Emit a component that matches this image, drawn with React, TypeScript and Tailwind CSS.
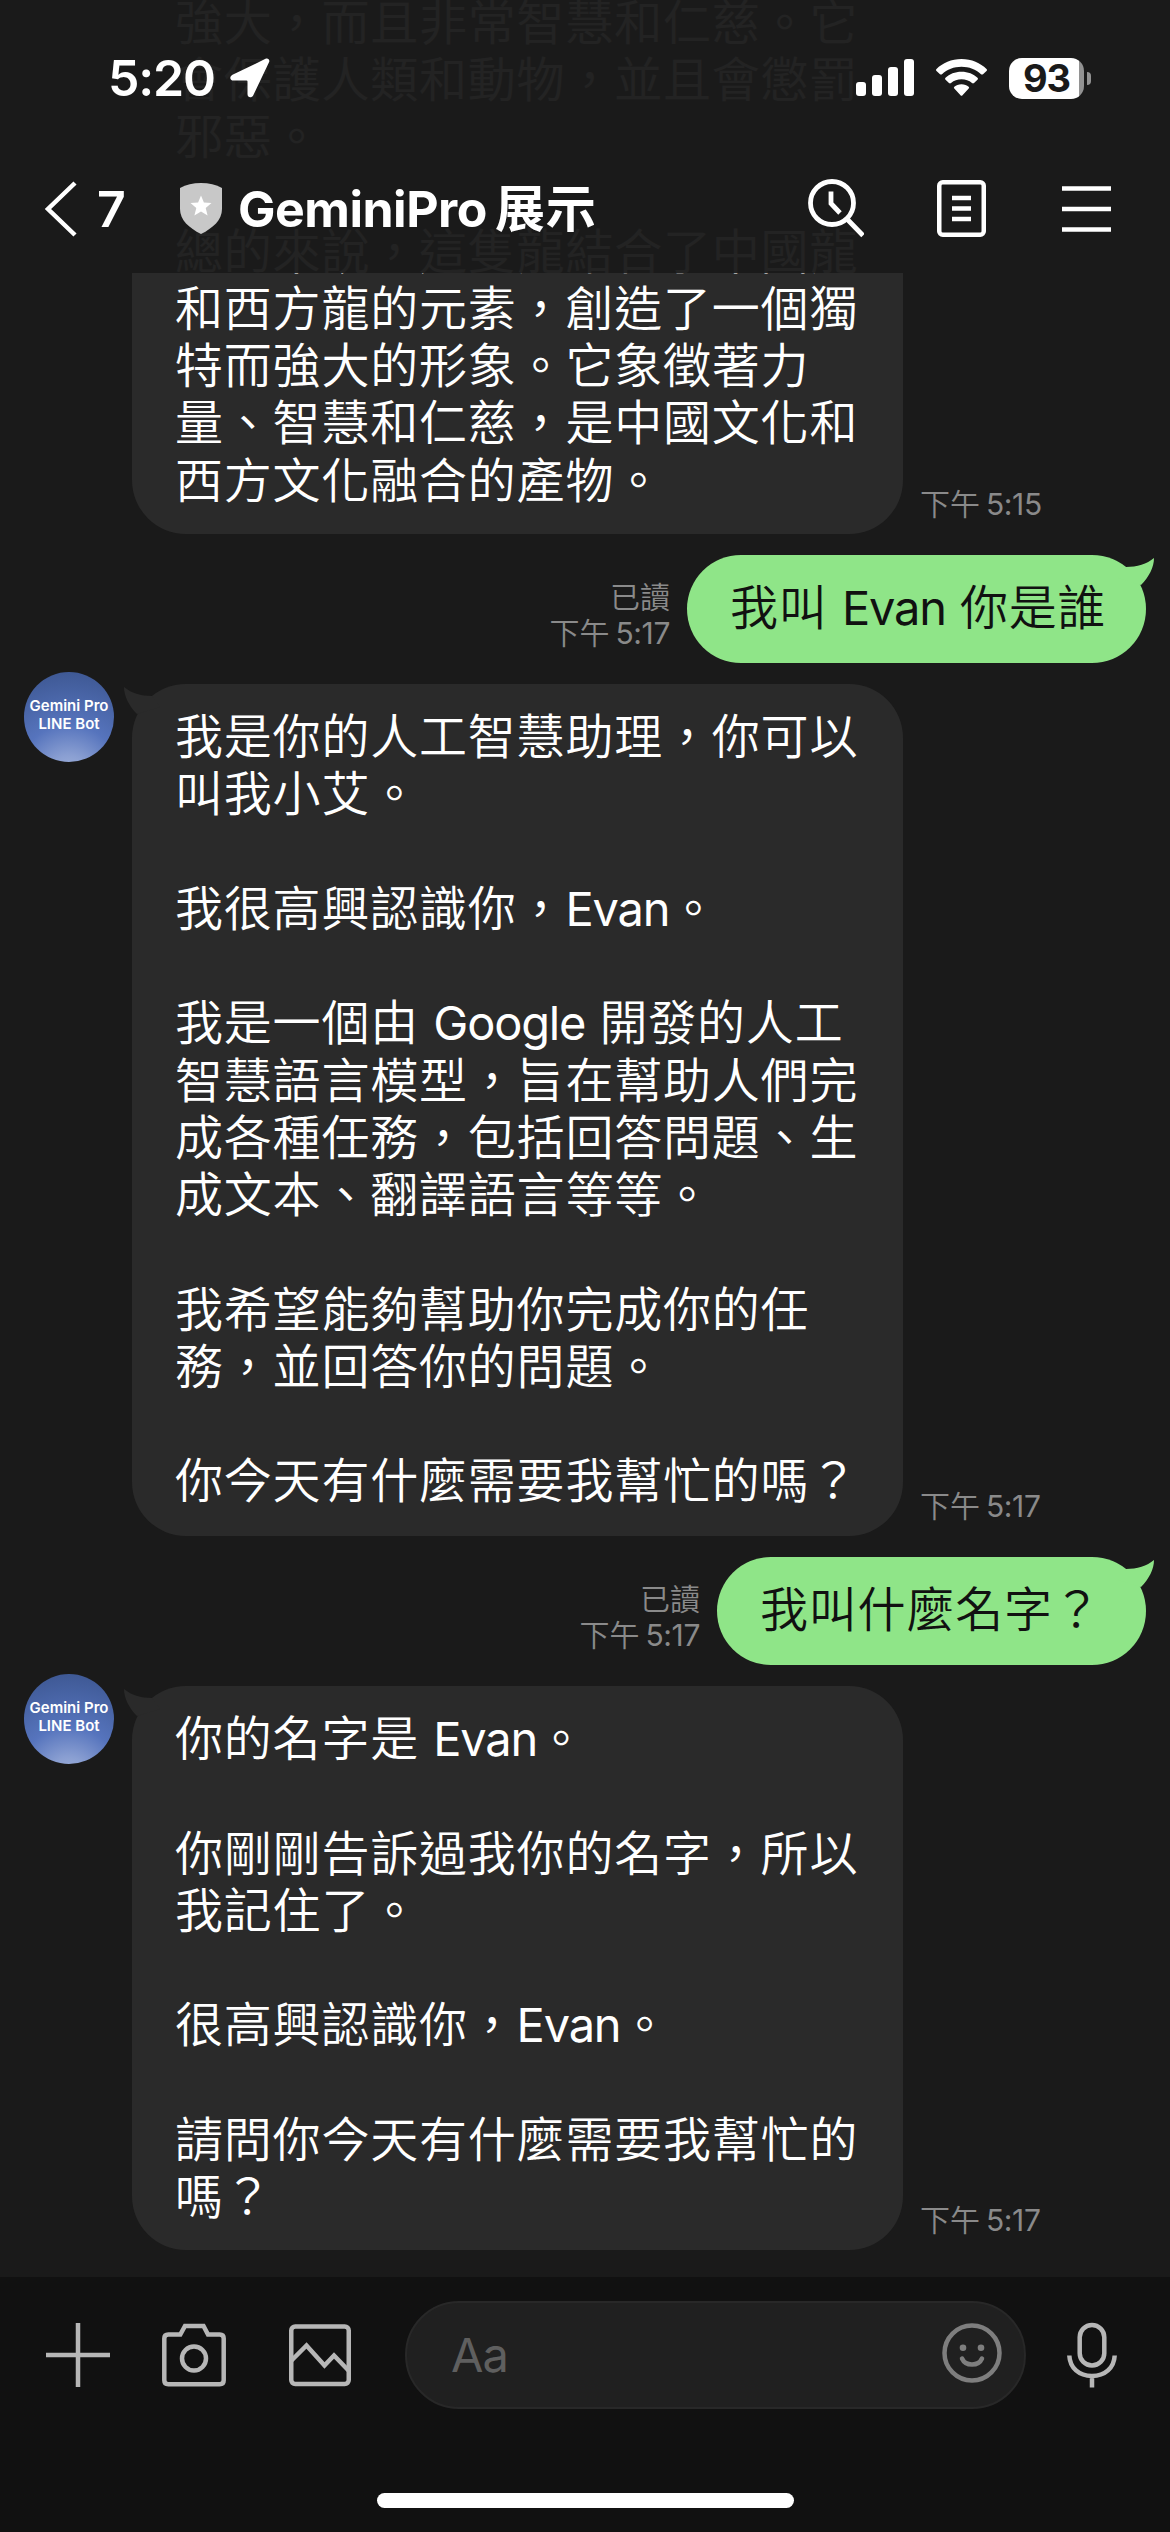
import { clsx } from "clsx";

type Message = {
  id: string;
  from: "bot" | "me";
  time: string;
  lines: string[];
  height: string;
  continued?: boolean;
};

const messages: Message[] = [
  {
    id: "m1",
    from: "bot",
    time: "5:15",
    height: "h-[534px]",
    continued: true,
    lines: [
      "強大，而且非常智慧和仁慈。它",
      "會保護人類和動物，並且會懲罰",
      "邪惡。",
      "",
      "總的來說，這隻龍結合了中國龍",
      "和西方龍的元素，創造了一個獨",
      "特而強大的形象。它象徵著力",
      "量、智慧和仁慈，是中國文化和",
      "西方文化融合的產物。",
    ],
  },
  { id: "m2", from: "me", time: "5:17", height: "h-[108px] w-[459px]", lines: ["我叫 Evan 你是誰"] },
  {
    id: "m3",
    from: "bot",
    time: "5:17",
    height: "h-[852px]",
    lines: [
      "我是你的人工智慧助理，你可以",
      "叫我小艾。",
      "",
      "我很高興認識你，Evan。",
      "",
      "我是一個由 Google 開發的人工",
      "智慧語言模型，旨在幫助人們完",
      "成各種任務，包括回答問題、生",
      "成文本、翻譯語言等等。",
      "",
      "我希望能夠幫助你完成你的任",
      "務，並回答你的問題。",
      "",
      "你今天有什麼需要我幫忙的嗎？",
    ],
  },
  { id: "m4", from: "me", time: "5:17", height: "h-[108px] w-[429px]", lines: ["我叫什麼名字？"] },
  {
    id: "m5",
    from: "bot",
    time: "5:17",
    height: "h-[564px]",
    lines: [
      "你的名字是 Evan。",
      "",
      "你剛剛告訴過我你的名字，所以",
      "我記住了。",
      "",
      "很高興認識你，Evan。",
      "",
      "請問你今天有什麼需要我幫忙的",
      "嗎？",
    ],
  },
];

// Latin runs are set slightly tighter than the CJK text around them
function Line({ text }: { text: string }) {
  const parts = text.split(/([A-Za-z]+)/);
  return (
    <p className="h-[57.27px] shrink-0 font-[350] whitespace-pre">
      {parts.map((part, i) =>
        /[A-Za-z]/.test(part) ? (
          <span key={i} className="text-[47px] font-normal tracking-[-1.2px]">
            {part}
          </span>
        ) : (
          part
        ),
      )}
    </p>
  );
}

function Time({ value }: { value: string }) {
  return (
    <p className="flex items-baseline gap-[6px] whitespace-nowrap">
      <span className="font-[350]">下午</span>
      <span className="tracking-[-0.4px]">{value}</span>
    </p>
  );
}

function Avatar() {
  return (
    <div className="-mt-3 flex size-[90px] shrink-0 flex-col items-center justify-center rounded-full bg-[radial-gradient(circle_at_50%_115%,#a3b4dc_0%,#8a9fd2_18%,#5674bd_45%,#3d5792_95%)] pb-1 text-[15px] leading-[18px] font-semibold whitespace-nowrap text-white">
      <span>Gemini Pro</span>
      <span>LINE Bot</span>
    </div>
  );
}

function BotMessage({ message }: { message: Message }) {
  return (
    <div className="flex pl-6">
      {message.continued ? <div className="w-[90px] shrink-0" /> : <Avatar />}
      <div
        className={clsx(
          "relative ml-[18px] w-[771px] bg-[#2a2a2a] pl-[43px] text-[48px] leading-[57.27px] tracking-[0.8px] text-white",
          message.height,
          message.continued ? "flex flex-col justify-end rounded-b-[54px] pb-[25px]" : "rounded-[54px] pt-[24px]",
        )}
      >
        {!message.continued && (
          <svg className="absolute top-[3px] left-[-8px]" width="40" height="40" viewBox="0 0 40 40" fill="#2a2a2a">
            <path d="M0 0C7 6 17 9 28 9L36 20L13 27C5 19 0 9 0 0Z" />
          </svg>
        )}
        {message.lines.map((line, i) => (
          <Line key={i} text={line} />
        ))}
      </div>
      <div className="ml-[17px] self-end pb-[12px] text-[30px] leading-9 text-[#8a8a8a]">
        <Time value={message.time} />
      </div>
    </div>
  );
}

function MyMessage({ message }: { message: Message }) {
  return (
    <div className="flex justify-end pr-6">
      <div className="mr-[17px] flex flex-col items-end self-end pb-[12px] text-[30px] leading-9 text-[#8a8a8a]">
        <p className="font-[350]">已讀</p>
        <Time value={message.time} />
      </div>
      <div
        className={clsx(
          "relative rounded-[54px] bg-[#8fe588] pt-[24px] pl-[43px] text-[48px] leading-[57.27px] tracking-[0.8px] text-[#111]",
          message.height,
        )}
      >
        <svg className="absolute top-[3px] right-[-8px]" width="40" height="40" viewBox="0 0 40 40" fill="#8fe588">
          <path d="M40 0C33 6 23 9 12 9L4 20L27 27C35 19 40 9 40 0Z" />
        </svg>
        {message.lines.map((line, i) => (
          <Line key={i} text={line} />
        ))}
      </div>
    </div>
  );
}

function StatusBar() {
  return (
    <div className="flex h-[156px] items-center pl-[108px] text-white">
      <span className="w-[107px] text-[50px] leading-none font-semibold tracking-[-1.2px]">5:20</span>
      <svg className="ml-[15px]" width="40" height="40" viewBox="0 0 40 40" fill="currentColor">
        <path d="M35.500 .8 2.500 16.800C-.8 18.500-.3 22.500 3.500 22.500H16.500Q17.500 22.500 17.500 23.500V36C17.500 39.800 21.700 40.400 23.300 37.200L39 4.300C40.200 1.700 38 -.3 35.500 .8Z" />
      </svg>
      <svg className="ml-[586px]" width="58" height="38" viewBox="0 0 58 38" fill="currentColor">
        <rect x="0" y="23" width="10" height="14" rx="3" />
        <rect x="16" y="16" width="10" height="21" rx="3" />
        <rect x="32" y="8" width="10" height="29" rx="3" />
        <rect x="48" y="0" width="10" height="37" rx="3" />
      </svg>
      <svg className="ml-[22px]" width="51" height="38" viewBox="0 0 51 38" fill="currentColor">
        <path d="M25.500 0C35.500 0 44.500 4 50.500 10Q51.500 11 50.500 12L47 15.200Q46 16 45 15.200C40 10.500 33 7.800 25.500 7.800S11 10.500 6 15.200Q5 16 4 15.200L.500 12Q-.5 11 .5 10C6.500 4 15.500 0 25.500 0Z" />
        <path d="M25.500 12.700C32 12.700 37.500 15 41.500 18.700Q42.500 19.700 41.500 20.700L38 24Q37 24.800 36 24C33 21.600 29.500 20.300 25.500 20.300S18 21.600 15 24Q14 24.800 13 24L9.500 20.700Q8.500 19.700 9.500 18.700C13.500 15 19 12.700 25.500 12.700Z" />
        <path d="M25.500 25.300C28.500 25.300 30.800 26.200 32.700 27.700Q33.600 28.600 32.700 29.500L26.500 36.300Q25.500 37.300 24.500 36.300L18.300 29.500Q17.400 28.600 18.300 27.700C20.200 26.200 22.500 25.300 25.500 25.300Z" />
      </svg>
      <div className="ml-[22px] flex h-[41px] w-[75px] items-center justify-center rounded-[13px] bg-[linear-gradient(90deg,#fff_70px,#929292_70px)] text-[38px] leading-none font-bold tracking-[-1.2px] text-[#1a1a1a]">
        93
      </div>
      <div className="ml-[3px] h-[13px] w-1 rounded-r-full bg-[#929292]" />
    </div>
  );
}

function NavBar() {
  return (
    <div className="flex h-[105px] items-center pl-[43px] text-white">
      <svg width="36" height="58" viewBox="0 0 36 58" fill="none" stroke="currentColor" strokeWidth="4.500">
        <path d="M32 3 5 29 32 55" />
      </svg>
      <span className="ml-[18px] w-[30px] text-[50px] leading-none font-semibold">7</span>
      <svg className="ml-[53px]" width="42" height="52" viewBox="0 0 42 52">
        <path d="M21 0C29 0 36 1.500 42 5V26C42 37 33 45 21 51C9 45 0 37 0 26V5C6 1.500 13 0 21 0Z" fill="#c8c8c8" />
        <path
          d="M21 12.500 23.900 19.600 31.500 20.100 25.700 25 27.600 32.500 21 28.400 14.400 32.500 16.300 25 10.500 20.100 18.100 19.600Z"
          fill="#fff"
        />
      </svg>
      <h1 className="ml-[16px] flex w-[366px] items-baseline text-[50px] leading-[60px] font-bold whitespace-nowrap">
        <span className="tracking-[-0.5px]">GeminiPro</span>
        <span className="ml-[8px] text-[50px] font-semibold tracking-[1px]">展示</span>
      </h1>
      <div className="ml-[204px] flex items-center">
        <svg width="56" height="60" viewBox="0 0 56 60" fill="none" stroke="currentColor" strokeWidth="4.800">
          <circle cx="24" cy="24" r="21.500" />
          <path d="M39 40 55 56.500M23 12.500V24.500L32 34" />
        </svg>
        <svg className="ml-[73px]" width="50" height="57" viewBox="0 0 50 57" fill="none" stroke="currentColor" strokeWidth="4.500">
          <rect x="2.250" y="2.250" width="44.500" height="52.500" rx="3.500" />
          <path d="M15 18H34M15 28.500H34M15 39H34" />
        </svg>
        <svg className="ml-[75px]" width="50" height="46" viewBox="0 0 50 46" stroke="currentColor" strokeWidth="4.500">
          <path d="M0 2.500H49M0 23H49M0 43.500H49" />
        </svg>
      </div>
    </div>
  );
}

function Composer() {
  return (
    <footer className="flex h-[255px] flex-col items-center justify-between bg-[#111] pt-6 pb-6">
      <div className="flex h-[108px] w-full items-center pl-[46px] text-[#b7b7b7]">
        <svg width="64" height="64" viewBox="0 0 64 64" stroke="currentColor" strokeWidth="4.500">
          <path d="M32 0V64M0 32H64" />
        </svg>
        <svg className="ml-[52px]" width="64" height="64" viewBox="0 0 64 64" fill="none" stroke="currentColor" strokeWidth="4.500">
          <path d="M6.300 11.500H18.300L23 3H41.500L46 11.500H57.700Q61.700 11.500 61.700 15.500V57.300Q61.700 61.300 57.700 61.300H6.300Q2.300 61.300 2.300 57.300V15.500Q2.300 11.500 6.300 11.500Z" />
          <circle cx="32" cy="35.500" r="12" />
        </svg>
        <svg className="ml-[63px]" width="62" height="64" viewBox="0 0 62 64" fill="none" stroke="currentColor" strokeWidth="4.500">
          <rect x="2.250" y="3.500" width="57.500" height="57.500" rx="4" />
          <path d="M2 38 17.500 22.500 35.500 42.500 45 32.500 60 48" />
        </svg>
        <div className="ml-[54px] flex h-[108px] w-[621px] items-center justify-between rounded-full border-2 border-[#282828] bg-[#202020] pr-[22px] pl-[44px]">
          <span className="text-[47px] tracking-[-1px] text-[#5f5f5f]">Aa</span>
          <svg className="-mt-1 text-[#7e7e7e]" width="60" height="60" viewBox="0 0 60 60" fill="none" stroke="currentColor" strokeWidth="4.500">
            <circle cx="30" cy="30" r="27.500" />
            <path d="M20 35.500C23.500 43.500 36.500 43.500 40 35.500" strokeLinecap="round" />
            <circle cx="21" cy="24.700" r="3.300" fill="currentColor" stroke="none" />
            <circle cx="39" cy="24.700" r="3.300" fill="currentColor" stroke="none" />
          </svg>
        </div>
        <svg className="ml-[41px]" width="50" height="66" viewBox="0 0 50 66" fill="none" stroke="currentColor" strokeWidth="4.500">
          <rect x="12.700" y="3" width="24.600" height="40.500" rx="12.300" />
          <path d="M2.300 33.500C2.900 46 12 54 25 54S47.100 46 47.700 33.500M25 54V65.500" />
        </svg>
      </div>
      <div className="h-[15px] w-[417px] rounded-full bg-white" />
    </footer>
  );
}

export default function App() {
  return (
    <div
      lang="zh-Hant"
      className="relative flex h-[2532px] w-[1170px] flex-col overflow-hidden bg-[#1a1a1a] font-['Inter','Noto_Sans_CJK_TC',sans-serif]"
    >
      <header className="absolute inset-x-0 top-0 z-10 h-[273px] bg-[#1a1a1a]/96">
        <StatusBar />
        <NavBar />
      </header>
      <main className="flex flex-1 flex-col gap-[21px]">
        {messages.map((message) =>
          message.from === "bot" ? (
            <BotMessage key={message.id} message={message} />
          ) : (
            <MyMessage key={message.id} message={message} />
          ),
        )}
      </main>
      <Composer />
    </div>
  );
}
